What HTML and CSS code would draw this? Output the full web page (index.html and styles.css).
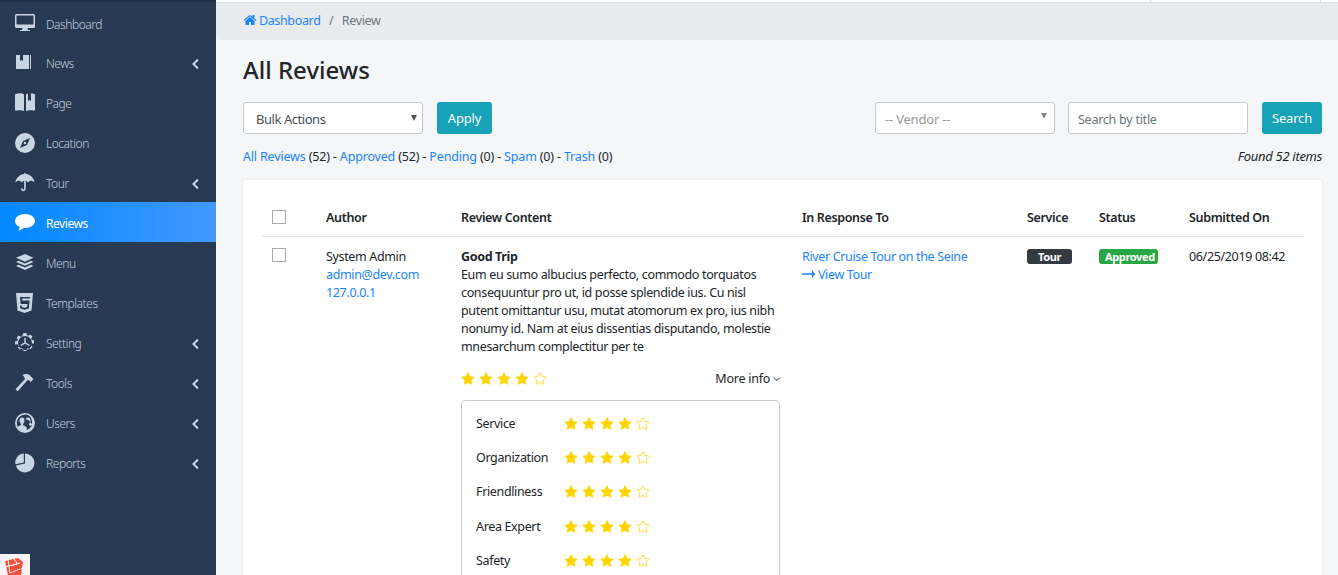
FILE: index.html
```html
<!DOCTYPE html>
<html lang="en">
<head>
  <meta charset="UTF-8">
  <title>All Reviews</title>
  <link rel="stylesheet" href="styles.css">
</head>
<body>
  <svg class="defs" width="0" height="0">
    <symbol id="star" viewBox="0 0 1792 1792">
      <path d="M1728 647q0 22-26 48l-363 354 86 500q1 7 1 20 0 21-10.5 35.5t-30.5 14.5q-19 0-40-12l-449-236-449 236q-22 12-40 12-21 0-31.5-14.5t-10.5-35.5q0-6 2-20l86-500-364-354q-25-27-25-48 0-37 56-46l502-73 225-455q19-41 49-41t49 41l225 455 502 73q56 9 56 46z"/>
    </symbol>
    <g id="stars">
      <use href="#star" width="14" height="14" x="0" y="1" class="star-on"/>
      <use href="#star" width="14" height="14" x="18" y="1" class="star-on"/>
      <use href="#star" width="14" height="14" x="36" y="1" class="star-on"/>
      <use href="#star" width="14" height="14" x="54" y="1" class="star-on"/>
      <use href="#star" width="13" height="13" x="72.500" y="1.500" class="star-off"/>
    </g>
  </svg>

  <div class="shell">
    <aside class="sidebar">
      <nav class="side-nav">
        <a class="side-item" href="#">
          <svg class="side-icon" viewBox="0 0 20 18"><path d="M1.500 0h17A1.500 1.500 0 0 1 20 1.500v11a1.500 1.500 0 0 1-1.500 1.500H12.500l.5 2h2v1H5v-1h2l.5-2H1.500A1.500 1.500 0 0 1 0 12.500v-11A1.500 1.500 0 0 1 1.500 0zm0 1.500v9h17v-9z" fill-rule="evenodd"/></svg>
          <span>Dashboard</span>
        </a>
        <a class="side-item" href="#">
          <svg class="side-icon" viewBox="0 0 20 18"><path d="M1 1h4v6l1.500-1L8 7V1h6v14H1zM15 1h.5a.5.500 0 0 1 .5.500v13a.500.500 0 0 1-.5.500H15z"/></svg>
          <span>News</span>
          <svg class="side-chev" viewBox="0 0 8 12"><path d="M6.500 1.500 2 6l4.500 4.500" fill="none" stroke-width="2"/></svg>
        </a>
        <a class="side-item" href="#">
          <svg class="side-icon" viewBox="0 0 20 20"><path d="M1 1c3-1 6-1 8 .5V18c-2-1-5-1-7.500-.5A1 1 0 0 1 0 16.500V2a1 1 0 0 1 1-1zM11 1.500c.5-.4 1-.6 2-.9V8l1.500-1L16 8V.3c1 0 2 .2 3 .7a1 1 0 0 1 1 1v14.500a1 1 0 0 1-1.500 1C16 17 13 17 11 18z"/></svg>
          <span>Page</span>
        </a>
        <a class="side-item" href="#">
          <svg class="side-icon" viewBox="0 0 20 20"><path d="M10 0a10 10 0 1 1 0 20 10 10 0 0 1 0-20zm5 5-7 3-3 7 7-3zM10 8.700a1.300 1.300 0 1 1 0 2.600 1.300 1.300 0 0 1 0-2.600z" fill-rule="evenodd"/></svg>
          <span>Location</span>
        </a>
        <a class="side-item" href="#">
          <svg class="side-icon" viewBox="0 0 20 20"><path d="M9.300 0h1.400v1C15.500 1.400 19 5 19.500 9.500c-1-1.300-2.300-1.800-3.300-1.800-1.300 0-2.300.6-3.200 1.800-.7-1-1.500-1.600-2.300-1.700v8c0 3.300-4.800 3.300-4.800 0v-.6h1.600v.6c0 1.400 1.600 1.400 1.600 0v-8c-.9.100-1.600.7-2.200 1.700-.9-1.200-2-1.800-3.200-1.800-1 0-2.300.5-3.400 1.800C1 5 4.500 1.400 9.300 1z"/></svg>
          <span>Tour</span>
          <svg class="side-chev" viewBox="0 0 8 12"><path d="M6.500 1.500 2 6l4.500 4.500" fill="none" stroke-width="2"/></svg>
        </a>
        <a class="side-item side-active" href="#">
          <svg class="side-icon" viewBox="0 0 20 18"><path d="M10 0c5.500 0 10 3.100 10 7s-4.500 7-10 7l-1.600-.1C7 15.200 5.300 16 3.300 16.500c.7-.9 1.300-2 1.500-3.400C1.900 11.900 0 9.600 0 7c0-3.900 4.500-7 10-7z"/></svg>
          <span>Reviews</span>
        </a>
        <a class="side-item" href="#">
          <svg class="side-icon" viewBox="0 0 20 18"><path d="M10 0l8.500 3.800L10 7.700 1 3.800zM3.500 6.700l6.500 2.900 6-2.900 2.500 1.200-8.500 3.800L1 7.900zM3.500 10.700l6.500 2.900 6-2.900 2.500 1.200-8.500 4L1 11.900z"/></svg>
          <span>Menu</span>
        </a>
        <a class="side-item" href="#">
          <svg class="side-icon" viewBox="0 0 20 20"><path d="M1 0h17l-1.500 17.500L9.500 20l-7-2.500zM5 4l.7 7h6.800l-.3 3-2.700.8-2.700-.8-.1-1.600H5l.3 3 4.200 1.300 4.300-1.300.8-8H7.300l-.2-2h7.700l.2-1.400z" fill-rule="evenodd"/></svg>
          <span>Templates</span>
        </a>
        <a class="side-item" href="#">
          <svg class="side-icon" viewBox="0 0 20 20"><path d="M8.500 0h3l.4 2.100 1.500.6L15.200 1.500l2.200 2.100-1.200 1.800.7 1.500 2.100.4v3l-2.100.4-.6 1.500 1.200 1.800-2.200 2.200-1.800-1.200-1.500.6-.5 2.400h-3l-.4-2.100-1.500-.6-1.800 1.200-2.100-2.100 1.200-1.800-.6-1.500L0 11.500v-3l2.200-.4.600-1.500L1.600 4.800l2.100-2.200 1.800 1.200 1.500-.6zM10 3a7 7 0 1 0 0 14 7 7 0 0 0 0-14zm-.7 1.700v4.900l-4 2.300.7 1.200 4.100-2.300 4.100 2.300.6-1.200-4.100-2.300V4.700z" fill-rule="evenodd"/></svg>
          <span>Setting</span>
          <svg class="side-chev" viewBox="0 0 8 12"><path d="M6.500 1.500 2 6l4.500 4.500" fill="none" stroke-width="2"/></svg>
        </a>
        <a class="side-item" href="#">
          <svg class="side-icon" viewBox="0 0 20 20"><path d="M7.500 2C10 .500 13.500.500 15.500 3l3 3-2.800 3-2.400-2.200-1.300.9L2.800 18.300.5 16.200 10 6l-.7-1.800z"/></svg>
          <span>Tools</span>
          <svg class="side-chev" viewBox="0 0 8 12"><path d="M6.500 1.500 2 6l4.500 4.500" fill="none" stroke-width="2"/></svg>
        </a>
        <a class="side-item" href="#">
          <svg class="side-icon" viewBox="0 0 20 20"><path d="M10 0a10 10 0 1 1 0 20 10 10 0 0 1 0-20zm0 1.800a8.200 8.200 0 0 0-7.200 12.100c.5-1 1.800-1.400 3.200-2v-1.100C5 10 4.500 8.800 4.500 7.500 4.500 5.700 5.500 4.500 7 4.500S9.500 5.700 9.500 7.500c0 1.300-.5 2.500-1.500 3.300v1.100l2.300 1.400c1 .6 1.500 1 1.700 2.700l-.7 1.200h.1a8.200 8.200 0 0 0-1.300-15.900zM13 4.500c1.500 0 2.500 1.200 2.500 3 0 1.300-.5 2.500-1.500 3.300v1.100c1.300.5 2.500 1 3.200 2A8 8 0 0 0 10.500 6c.2-.7 1-1.500 2.500-1.500z" fill-rule="evenodd"/></svg>
          <span>Users</span>
          <svg class="side-chev" viewBox="0 0 8 12"><path d="M6.500 1.500 2 6l4.500 4.500" fill="none" stroke-width="2"/></svg>
        </a>
        <a class="side-item" href="#">
          <svg class="side-icon" viewBox="0 0 20 20"><path d="M10 .500a9.500 9.500 0 1 1-9.200 12l9.200-2z"/><path d="M8.800.500v8.900L.500 11.300A9 9 0 0 1 8.800.500z"/></svg>
          <span>Reports</span>
          <svg class="side-chev" viewBox="0 0 8 12"><path d="M6.500 1.500 2 6l4.500 4.500" fill="none" stroke-width="2"/></svg>
        </a>
      </nav>
      <div class="debug-logo">
        <svg viewBox="0 0 18 18" width="18" height="18"><path class="logo-red" d="M0 3 13 0l5 4-1 6-2 1 2 1-1 5-7 3-6-3z"/><path class="logo-line" d="M3 2 5 15M0 9l15-4M6 8l8-3M5 15l10-4M9 1l3 4"/></svg>
      </div>
    </aside>

    <main class="main">
      <div class="topline">
        <span class="topline-cell"></span>
      </div>
      <div class="breadcrumb">
        <a href="#">
          <svg class="home-icon" viewBox="0 0 1792 1792"><path d="M1472 992v480q0 26-19 45t-45 19h-384v-384h-256v384h-384q-26 0-45-19t-19-45v-480q0-1 .5-3t.5-3l575-474 575 474q1 2 1 6zm223-69l-62 74q-8 9-21 11h-3q-13 0-21-7l-692-577-692 577q-12 8-24 7-13-2-21-11l-62-74q-8-10-7-23.500t11-21.500l719-599q32-26 76-26t76 26l244 204v-195q0-14 9-23t23-9h192q14 0 23 9t9 23v408l219 182q10 8 11 21.500t-7 23.500z"/></svg>
          Dashboard
        </a>
        <span class="crumb-sep">/</span>
        <span class="crumb-now">Review</span>
      </div>

      <div class="content">
        <h1>All Reviews</h1>

        <div class="toolbar">
          <div class="toolbar-group">
            <div class="select-box"><span>Bulk Actions</span></div>
            <button class="btn">Apply</button>
          </div>
          <div class="toolbar-group">
            <div class="select-box vendor"><span>-- Vendor --</span></div>
            <input class="search-input" type="text" placeholder="Search by title">
            <button class="btn btn-search">Search</button>
          </div>
        </div>

        <div class="status-row">
          <div class="status-links">
            <a href="#">All Reviews</a> (52) - <a href="#">Approved</a> (52) - <a href="#">Pending</a> (0) - <a href="#">Spam</a> (0) - <a href="#">Trash</a> (0)
          </div>
          <em>Found 52 items</em>
        </div>

        <div class="panel">
          <table class="review-table">
            <colgroup>
              <col class="c-check"><col class="c-author"><col class="c-review"><col class="c-resp"><col class="c-service"><col class="c-status"><col class="c-date">
            </colgroup>
            <thead>
              <tr>
                <th><span class="checkbox"></span></th>
                <th>Author</th>
                <th>Review Content</th>
                <th>In Response To</th>
                <th>Service</th>
                <th>Status</th>
                <th>Submitted On</th>
              </tr>
            </thead>
            <tbody>
              <tr>
                <td><span class="checkbox"></span></td>
                <td>System Admin<br><a href="#">admin@dev.com</a><br><a href="#">127.0.0.1</a></td>
                <td>
                  <strong>Good Trip</strong><br>
                  Eum eu sumo albucius perfecto, commodo torquatos consequuntur pro ut, id posse splendide ius. Cu nisl putent omittantur usu, mutat atomorum ex pro, ius nibh nonumy id. Nam at eius dissentias disputando, molestie mnesarchum complectitur per te
                  <div class="rating-row">
                    <svg class="stars" viewBox="0 0 90 16"><use href="#stars"/></svg>
                    <span class="more-info">More info <svg class="more-chev" viewBox="0 0 8 6"><path d="M1 1.500 4 4.500 7 1.500" fill="none" stroke-width="1"/></svg></span>
                  </div>
                  <div class="rating-box">
                    <div class="rating-item"><span>Service</span><svg class="stars" viewBox="0 0 90 16"><use href="#stars"/></svg></div>
                    <div class="rating-item"><span>Organization</span><svg class="stars" viewBox="0 0 90 16"><use href="#stars"/></svg></div>
                    <div class="rating-item"><span>Friendliness</span><svg class="stars" viewBox="0 0 90 16"><use href="#stars"/></svg></div>
                    <div class="rating-item"><span>Area Expert</span><svg class="stars" viewBox="0 0 90 16"><use href="#stars"/></svg></div>
                    <div class="rating-item"><span>Safety</span><svg class="stars" viewBox="0 0 90 16"><use href="#stars"/></svg></div>
                  </div>
                </td>
                <td>
                  <a href="#">River Cruise Tour on the Seine</a><br>
                  <a href="#"><svg class="arrow-icon" viewBox="0 0 13 8"><path d="M0 3.200h10V0l3 4-3 4V4.800H0z"/></svg> View Tour</a>
                </td>
                <td><span class="badge badge-dark">Tour</span></td>
                <td><span class="badge badge-green">Approved</span></td>
                <td>06/25/2019 08:42</td>
              </tr>
            </tbody>
          </table>
        </div>
      </div>
    </main>
  </div>
</body>
</html>
```

FILE: styles.css
```css
* {
  box-sizing: border-box;
}

html, body {
  margin: 0;
  padding: 0;
  height: 100%;
  overflow: hidden;
}

body {
  font-family: "Noto Sans", Arial, sans-serif;
  font-size: 12.5px;
  line-height: 18px;
  letter-spacing: -0.35px;
  color: #212529;
  background-color: #f4f6f8;
}

a {
  color: #1a84ff;
  text-decoration: none;
}

.defs {
  position: absolute;
}

.star-on {
  fill: #ffd500;
}

.star-off {
  fill: none;
  stroke: #ffd500;
  stroke-width: 110;
}

.shell {
  display: flex;
  height: 575px;
  overflow: hidden;
}

/* sidebar */
.sidebar {
  position: relative;
  flex: 0 0 216px;
  background-color: #273a52;
  border-top: 2px solid #1f2f44;
}

.side-item {
  display: flex;
  align-items: center;
  height: 40px;
  padding: 2px 15px 0;
  font-size: 12px;
  font-weight: 300;
  letter-spacing: -0.45px;
  color: #c5d0dc;
}

.side-item span {
  flex: 1;
  padding-top: 2px;
}

.side-item:first-child span {
  padding-top: 4px;
}

.side-icon {
  flex: 0 0 20px;
  width: 20px;
  height: 20px;
  margin-right: 11px;
  fill: #c9d5e2;
}

.side-chev {
  width: 9px;
  height: 12px;
  margin: 2px 1px 0 0;
  stroke: #c9d5e2;
}

.side-active {
  color: #fff;
  font-weight: 400;
  background: linear-gradient(90deg, #0088ff, #4298ff);
}

.side-active .side-icon {
  fill: #fff;
}

.debug-logo {
  position: absolute;
  left: 0;
  bottom: 0;
  width: 30px;
  height: 21px;
  padding: 4px 0 0 5px;
  overflow: hidden;
  background-color: #f5f5f5;
}

.logo-red {
  fill: #f4503a;
}

.logo-line {
  fill: none;
  stroke: #f5f5f5;
  stroke-width: 1;
}

/* main */
.main {
  flex: 1;
  min-width: 0;
}

.topline {
  display: flex;
  justify-content: flex-end;
  height: 3px;
  padding-right: 17px;
  background-color: #fff;
  border-bottom: 1px solid #dcdfe3;
}

.topline-cell {
  width: 171px;
  border-left: 1px solid #dcdfe3;
  border-right: 1px solid #dcdfe3;
}

.breadcrumb {
  display: flex;
  align-items: center;
  height: 37px;
  padding: 0 27px 1px;
  background-color: #e9ecef;
  border-radius: 0 0 0 4px;
}

.home-icon {
  width: 14px;
  height: 14px;
  margin-right: -1px;
  vertical-align: -2px;
  fill: #1a84ff;
}

.crumb-sep {
  padding: 0 8.5px;
  color: #6c757d;
}

.crumb-now {
  color: #6c757d;
}

.content {
  padding: 0 16px 0 27px;
}

h1 {
  margin: 0;
  padding-top: 13px;
  font-size: 24px;
  font-weight: 500;
  line-height: 33px;
  letter-spacing: 0;
}

.toolbar {
  display: flex;
  justify-content: space-between;
  margin-top: 16px;
}

.toolbar-group {
  display: flex;
  gap: 14px;
}

.select-box {
  position: relative;
  width: 180px;
  height: 32px;
  padding: 0 12px;
  font-size: 13px;
  line-height: 33px;
  letter-spacing: -0.45px;
  color: #495057;
  background-color: #fff;
  border: 1px solid #c5cad2;
  border-radius: 3px;
}

.select-box::after {
  content: "";
  position: absolute;
  right: 5px;
  top: 12px;
  border-left: 3.5px solid transparent;
  border-right: 3.5px solid transparent;
  border-top: 6px solid #555;
}

.vendor {
  padding-left: 9px;
  margin-right: -1px;
  letter-spacing: -0.2px;
  color: #999;
}

.vendor::after {
  right: 7px;
  top: 10px;
  border-top-color: #888;
}

.search-input {
  width: 180px;
  height: 32px;
  padding: 2px 9px 0;
  font: inherit;
  letter-spacing: -0.25px;
  background-color: #fff;
  border: 1px solid #c5cad2;
  border-radius: 3px;
  outline: none;
}

.search-input::placeholder {
  color: #6c757d;
  opacity: 1;
}

.btn {
  width: 55px;
  height: 32px;
  padding: 0;
  font: inherit;
  font-size: 13px;
  letter-spacing: -0.2px;
  color: #fff;
  background-color: #17a2b8;
  border: none;
  border-radius: 3px;
}

.btn-search {
  width: 60px;
}

.status-row {
  display: flex;
  justify-content: space-between;
  margin-top: 14px;
  letter-spacing: -0.17px;
}

.status-row em {
  margin-top: -1px;
  font-size: 13px;
  letter-spacing: -0.3px;
}

.panel {
  margin-top: 14px;
  padding: 18px 18px 0 19px;
  height: 400px;
  background-color: #fff;
  border-radius: 3px;
  box-shadow: 0 0 2px rgba(0, 0, 0, 0.1);
}

.review-table {
  width: 1042px;
  table-layout: fixed;
  border-collapse: collapse;
}

.c-check { width: 54px; }
.c-author { width: 135px; }
.c-review { width: 341px; }
.c-resp { width: 225px; }
.c-service { width: 72px; }
.c-status { width: 90px; }
.c-date { width: 125px; }

.review-table th {
  height: 38px;
  padding: 2px 10px 0;
  font-weight: 600;
  text-align: left;
  border-bottom: 1px solid #dee2e6;
}

.review-table th:first-child {
  padding-top: 0;
}

.review-table td {
  padding: 11px 10px 10px;
  vertical-align: top;
}

.checkbox {
  display: inline-block;
  width: 14px;
  height: 14px;
  vertical-align: middle;
  background-color: #fff;
  border: 1px solid #aaa;
}

.review-table td .checkbox {
  vertical-align: -1px;
}

.rating-row {
  display: flex;
  align-items: center;
  justify-content: space-between;
  margin-top: 14px;
}

.more-info {
  letter-spacing: -0.25px;
  padding-right: 1px;
}

.stars {
  width: 90px;
  height: 16px;
}

.more-chev {
  width: 8px;
  height: 6px;
  vertical-align: 1px;
  stroke: #212529;
}

.rating-box {
  height: 200px;
  margin-top: 12px;
  padding: 6px 14px;
  border: 1px solid #ccc;
  border-radius: 4px;
  width: 319px;
}

.rating-item {
  display: flex;
  align-items: center;
  height: 34.4px;
}

.rating-item span {
  flex: 0 0 88px;
}

.arrow-icon {
  width: 13px;
  height: 8px;
  fill: #1a84ff;
  vertical-align: 1px;
}

.badge {
  display: inline-block;
  height: 15px;
  padding: 0 6px;
  font-size: 11px;
  font-weight: 700;
  line-height: 15px;
  color: #fff;
  border-radius: 3px;
  vertical-align: 0;
}

.badge-dark {
  width: 45px;
  text-align: center;
  background-color: #343a40;
}

.badge-green {
  width: 59px;
  text-align: center;
  background-color: #28a745;
}
```
